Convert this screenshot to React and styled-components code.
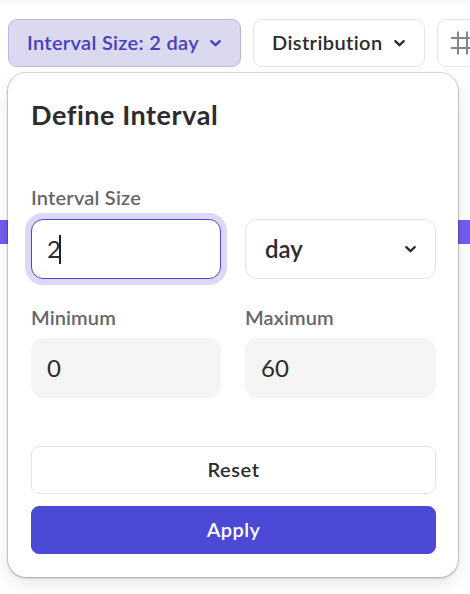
import React from "react";
import styled, { createGlobalStyle } from "styled-components";

const GlobalStyle = createGlobalStyle`
  * { box-sizing: border-box; }
  body {
    margin: 0;
    overflow: hidden;
    background: #fff;
    color: #2b2b30;
    font-family: Lato, "Open Sans", sans-serif;
    font-size: 20px;
  }
  button, input { font: inherit; color: inherit; }
`;

const Page = styled.main`
  position: relative;
  width: 470px;
  height: 594px;
  overflow: hidden;
  background: linear-gradient(#f7f7f7, #fff 9px);
`;

const Toolbar = styled.div`
  display: flex;
  gap: 12px;
  padding: 19px 0 0 8px;
  width: 640px;
`;

const ToolButton = styled.button`
  display: flex;
  align-items: center;
  flex: none;
  width: ${(p) => p.$width}px;
  height: 48px;
  padding: 0 0 0 ${(p) => p.$inset || 18}px;
  border: 1px solid ${(p) => (p.$active ? "#bbb6e3" : "#e6e6e6")};
  border-radius: 9px;
  background: ${(p) => (p.$active ? "#dbd9f0" : "#fff")};
  color: ${(p) => (p.$active ? "#4640bd" : "#2b2b30")};
  font-weight: 600;
`;

const Text = styled.span`
  flex: none;
  padding-bottom: 2px;
  text-align: left;
  white-space: nowrap;
  letter-spacing: ${(p) => p.$track || 0}px;
  width: ${(p) => (p.$width ? `${p.$width}px` : "auto")};
`;

const Timeline = styled.div`
  margin-top: 153px;
  height: 24px;
  background: #735bf0;
`;

const Popover = styled.section`
  position: absolute;
  left: 8px;
  top: 73px;
  width: 450px;
  height: 504px;
  padding: 24px 22px 23px 23px;
  display: flex;
  flex-direction: column;
  border-radius: 18px;
  background: #fff;
  box-shadow: 0 0 0 1px rgba(0, 0, 0, 0.13), 0 1px 3px rgba(0, 0, 0, 0.22),
    0 8px 20px rgba(0, 0, 0, 0.09);
`;

const Title = styled.h1`
  margin: 0;
  height: 85px;
  font-size: 27px;
  line-height: 36px;
  font-weight: 700;
  letter-spacing: 0.55px;
`;

const Fields = styled.div`
  display: grid;
  grid-template-columns: 190px 191px;
  grid-template-rows: 97px 96px;
  column-gap: 24px;
  row-gap: 23px;
`;

const Field = styled.label`
  display: flex;
  flex-direction: column;
  justify-content: flex-end;
`;

const Label = styled.span`
  flex: 1;
  line-height: 30px;
  color: #66666a;
  font-weight: 600;
  letter-spacing: ${(p) => p.$track || 0}px;
`;

const Control = styled.div`
  display: flex;
  align-items: center;
  height: 60px;
  padding: 0 18px 0 ${(p) => p.$inset || 15}px;
  border-radius: 12px;
  border: 1px solid
    ${(p) => (p.$focused ? "#4b47d6" : p.$filled ? "#f5f5f5" : "#e6e6e6")};
  background: ${(p) => (p.$filled ? "#f5f5f5" : "#fff")};
  box-shadow: ${(p) => (p.$focused ? "0 0 0 6px #dbd9f6" : "none")};
  font-size: 24px;
`;

const Caret = styled.i`
  width: 2px;
  height: 29px;
  margin-left: -2px;
  background: #222;
`;

const SelectControl = styled(Control)`
  justify-content: space-between;
  padding-left: 19px;
  font-weight: 600;
`;

const Actions = styled.div`
  display: grid;
  gap: 12px;
  margin-top: auto;
`;

const ActionButton = styled.button`
  height: 48px;
  padding: 0 0 2px;
  border: 1px solid ${(p) => (p.$primary ? "#4b49d6" : "#e6e6e6")};
  border-radius: 8px;
  background: ${(p) => (p.$primary ? "#4b49d6" : "#fff")};
  color: ${(p) => (p.$primary ? "#fff" : "#2b2b30")};
  font-weight: 600;
  letter-spacing: ${(p) => p.$track || 0}px;
`;

const Icon = styled.svg`
  flex: none;
  display: block;
  fill: none;
  stroke: currentColor;
`;

const Chevron = () => (
  <Icon width="13" height="8" viewBox="0 0 13 8" strokeWidth="2.3">
    <path d="M2.3 2.1 6.5 6.1 10.7 2.1" strokeLinecap="round" />
  </Icon>
);

const Hash = styled(Icon)`
  color: #858585;
`;

export default function App() {
  return (
    <>
      <GlobalStyle />
      <Page>
        <Toolbar>
          <ToolButton $active $width={233}>
            <Text $track={0.32} $width={182}>Interval Size: 2 day</Text>
            <Chevron />
          </ToolButton>
          <ToolButton $width={172}>
            <Text $track={0.4} $width={121}>Distribution</Text>
            <Chevron />
          </ToolButton>
          <ToolButton $width={172} $inset={13}>
            <Hash width="24" height="24" viewBox="0 0 24 24" strokeWidth="2">
              <path d="M0 7h24M0 17h24M7 .5v23M16 .5v23" />
            </Hash>
          </ToolButton>
        </Toolbar>
        <Timeline />
        <Popover>
          <Title>Define Interval</Title>
          <Fields>
            <Field>
              <Label $track={0.2}>Interval Size</Label>
              <Control $focused>
                <Text>2</Text>
                <Caret />
              </Control>
            </Field>
            <Field>
              <SelectControl>
                <Text>day</Text>
                <Chevron />
              </SelectControl>
            </Field>
            <Field>
              <Label $track={0.1}>Minimum</Label>
              <Control $filled>
                <Text>0</Text>
              </Control>
            </Field>
            <Field>
              <Label $track={0.1}>Maximum</Label>
              <Control $filled>
                <Text>60</Text>
              </Control>
            </Field>
          </Fields>
          <Actions>
            <ActionButton $track={0.6}>Reset</ActionButton>
            <ActionButton $primary $track={0.4}>Apply</ActionButton>
          </Actions>
        </Popover>
      </Page>
    </>
  );
}
